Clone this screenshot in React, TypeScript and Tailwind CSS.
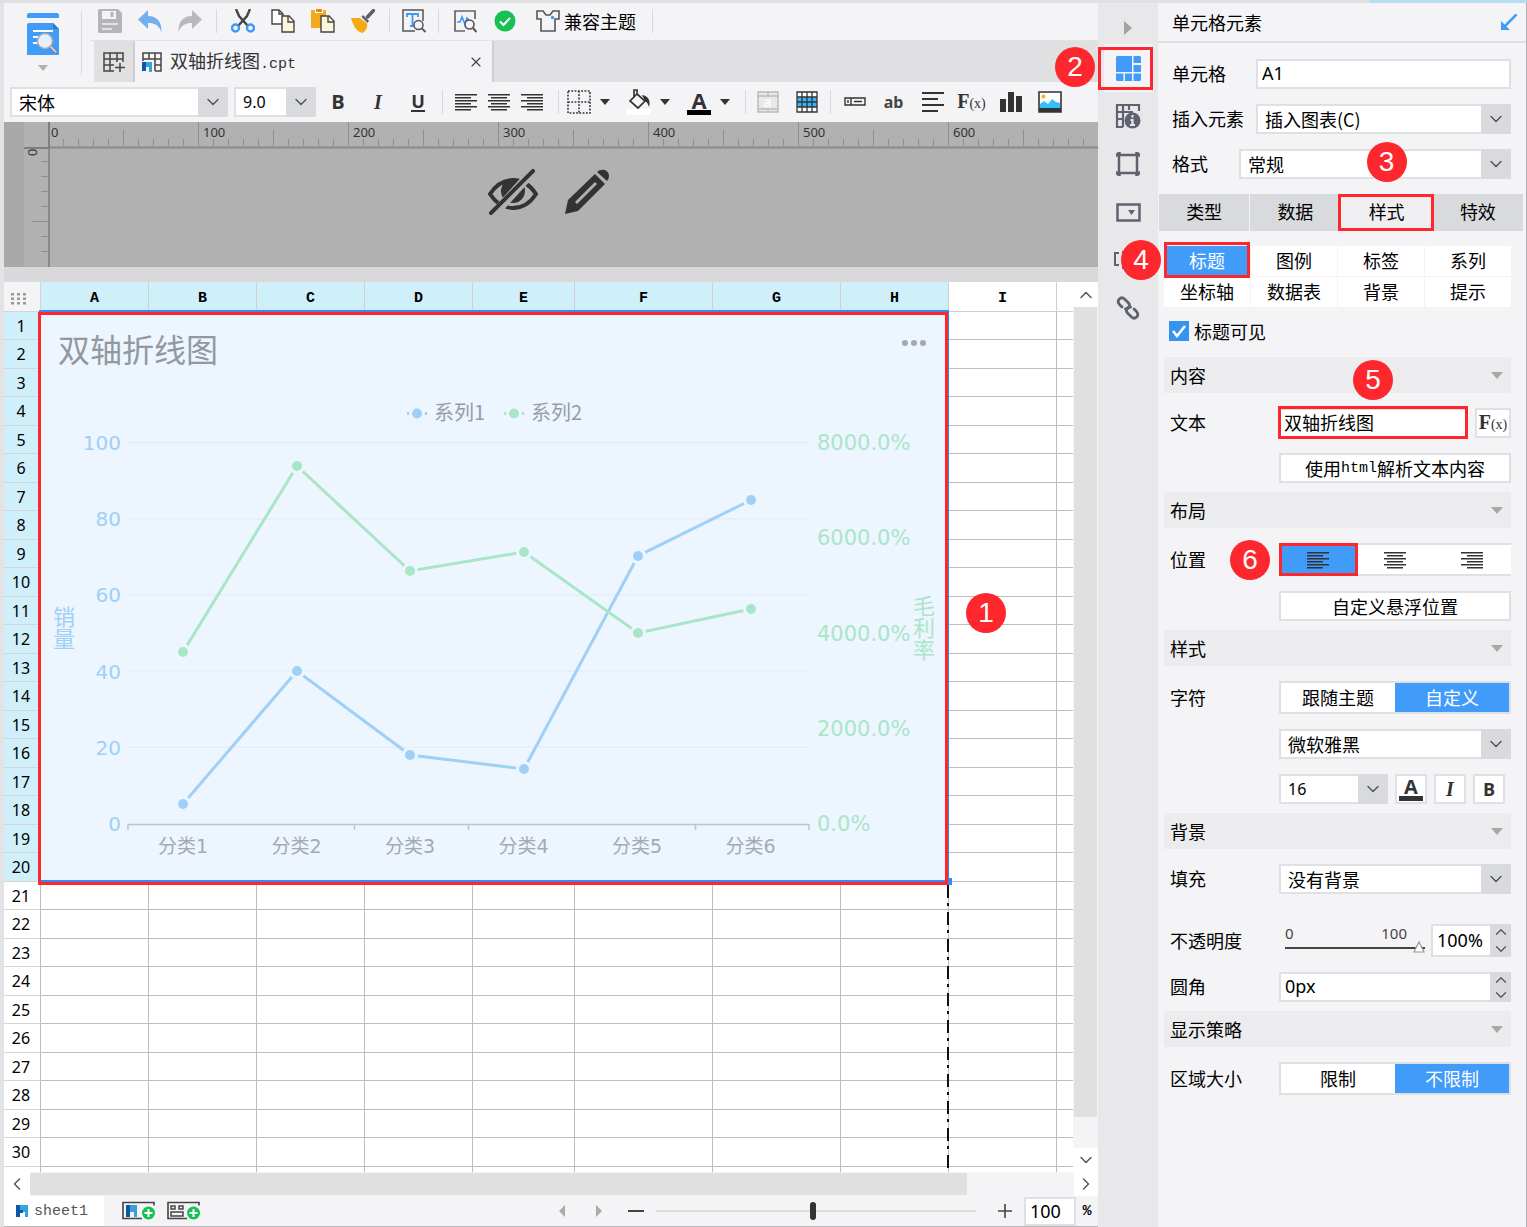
import type { ReactNode } from 'react';
import { ChevronDown, ChevronLeft, ChevronRight, ChevronUp, X } from 'lucide-react';

const columns = [
  { name: 'A', width: 'w-[108px]' },
  { name: 'B', width: 'w-[108px]' },
  { name: 'C', width: 'w-[108px]' },
  { name: 'D', width: 'w-[108px]' },
  { name: 'E', width: 'w-[102px]' },
  { name: 'F', width: 'w-[138px]' },
  { name: 'G', width: 'w-[128px]' },
  { name: 'H', width: 'w-[108px]' },
  { name: 'I', width: 'w-[108px]' },
];

const rows = Array.from({ length: 30 }, (_, i) => i + 1);

/* ---------- small shared parts ---------- */

const Badge = ({ children, className }: { children: ReactNode; className: string }) => (
  <span
    className={`pointer-events-none absolute z-20 flex size-10 items-center justify-center rounded-full bg-[#fd272d] font-['Liberation_Sans',sans-serif] text-[28px] leading-none text-white ${className}`}
  >
    {children}
  </span>
);

const Outline = ({ className }: { className: string }) => (
  <span className={`pointer-events-none absolute z-10 border-3 border-[#fd272d] ${className}`} />
);

const Separator = () => <span className="mx-1.5 h-6 w-px shrink-0 bg-[#d9d9dc]" />;

const Caret = () => (
  <svg viewBox="0 0 10 6" className="h-1.5 w-2.5 shrink-0 fill-[#333]">
    <path d="M0 0h10L5 6z" />
  </svg>
);

const IconButton = ({ label, width = 'w-10', children }: { label: string; width?: string; children: ReactNode }) => (
  <button type="button" aria-label={label} className={`flex h-8 shrink-0 items-center justify-center ${width}`}>
    {children}
  </button>
);

const AlignIcon = ({ kind }: { kind: 'left' | 'center' | 'right' }) => {
  const short = { left: 0, center: 3, right: 6 }[kind];
  return (
    <svg viewBox="0 0 22 18" className="h-[18px] w-[22px] fill-[#333]">
      {[0, 1, 2, 3, 4, 5].map((n) => (
        <rect key={n} x={n % 2 ? short : 0} y={n * 3 + 1} width={n % 2 ? 16 : 22} height="1.5" />
      ))}
    </svg>
  );
};

const FxText = () => (
  <span className="font-['Liberation_Serif',serif] text-xl leading-none text-[#333]">
    <b>F</b>
    <span className="text-sm">(x)</span>
  </span>
);

const Select = ({ label, id, value, className }: { label: string; id: string; value: string; className: string }) => (
  <div className={`relative h-[30px] ${className}`}>
    <select
      id={id}
      aria-label={label}
      className="block size-full appearance-none border-2 border-[#dfe0e3] bg-white pr-8 pl-[7px] leading-[26px] outline-none"
    >
      <option>{value}</option>
    </select>
    <span className="pointer-events-none absolute inset-y-0 right-0 flex w-[30px] items-center justify-center bg-[#d9dadd]">
      <ChevronDown size={20} strokeWidth={1.75} className="text-[#555]" />
    </span>
  </div>
);

/* ---------- top toolbars ---------- */

const MainToolbar = () => (
  <div className="flex h-[38px] items-center border-b border-[#e3e3e6] pb-0.5">
    <IconButton label="保存">
      <svg viewBox="0 0 24 24" className="size-6">
        <path d="M0 1.500Q0 0 1.500 0H20l4 4v18.500Q24 24 22.500 24h-21Q0 24 0 22.500z" fill="#b5b5b7" />
        <path d="M4 2h14v8H4z" fill="#f4f4f7" />
        <path d="M12.500 3h3v5h-3z" fill="#b5b5b7" />
        <path d="M4 15h16M4 20h10" stroke="#f4f4f7" strokeWidth="1.500" />
      </svg>
    </IconButton>
    <IconButton label="撤销">
      <svg viewBox="0 0 24 24" className="size-6 fill-[#74aef0]">
        <path d="M10 1v6c9 0 14 6 13.500 16C21 16.500 17 14 10 14v6L0 10.500z" />
      </svg>
    </IconButton>
    <IconButton label="重做">
      <svg viewBox="0 0 24 24" className="size-6 fill-[#b9b9bb]">
        <path d="M14 1v6C5 7 0 13 .500 23 3 16.500 7 14 14 14v6l10-9.500z" />
      </svg>
    </IconButton>
    <Separator />
    <IconButton label="剪切">
      <svg viewBox="0 0 24 24" className="size-6 fill-none">
        <path d="M5 0l3 7 9 10M19 0l-3 7-9 10" stroke="#444" strokeWidth="2.400" />
        <circle cx="4.500" cy="19" r="3.500" stroke="#3d98f8" strokeWidth="2.400" />
        <circle cx="19.500" cy="19" r="3.500" stroke="#3d98f8" strokeWidth="2.400" />
      </svg>
    </IconButton>
    <IconButton label="复制">
      <svg viewBox="0 0 24 24" className="size-6" stroke="#444" strokeWidth="1.400">
        <path d="M1 1h7l4 4v10H1z" fill="#fff" />
        <path d="M11 7h7l5 5v11H11z" fill="#fff4dc" />
        <path d="M17 7v6h6M8 1v4h4" fill="none" />
      </svg>
    </IconButton>
    <IconButton label="粘贴">
      <svg viewBox="0 0 24 24" className="size-6">
        <path d="M0 1h15v18H0z" fill="#f2aa1d" />
        <path d="M4 0h8v4H4z" fill="#fff" />
        <path d="M5 0h6v3H5z" fill="#e58a10" />
        <path d="M10 7h8l5 5v11H10z" fill="#fff4dc" stroke="#444" strokeWidth="1.400" />
        <path d="M17 7v6h6" fill="none" stroke="#444" strokeWidth="1.400" />
      </svg>
    </IconButton>
    <IconButton label="格式刷">
      <svg viewBox="0 0 24 24" className="size-6">
        <path d="M22.500 1.500l-6 6.500" stroke="#5d5d6b" strokeWidth="3.500" strokeLinecap="round" />
        <path d="M12 6l6 6-1.500 2-6-6z" fill="#5d5d6b" />
        <path d="M0 9h9l7 5.500c1 4-2 8.500-5 9.500C5 22 2 16 0 9z" fill="#f5a912" />
      </svg>
    </IconButton>
    <Separator />
    <IconButton label="查找文本" width="w-9">
      <svg viewBox="0 0 24 24" className="size-6 fill-none">
        <path d="M21 12V1H1v21h12" stroke="#555" strokeWidth="1.500" />
        <path d="M5 8V5h11v3M10.500 5v12M8 17h5" stroke="#3d98f8" strokeWidth="1.800" />
        <circle cx="16.500" cy="16" r="4.500" fill="#f4f4f7" stroke="#555" strokeWidth="1.500" />
        <path d="M20 19.500l3.500 3.500" stroke="#555" strokeWidth="1.800" />
      </svg>
    </IconButton>
    <Separator />
    <IconButton label="模板检测">
      <svg viewBox="0 0 24 24" className="size-6 fill-none">
        <path d="M22 10V2H2v20h10" stroke="#666" strokeWidth="1.700" />
        <path d="M4 13h3l2-5 3 7 2-6 2 2" stroke="#3d98f8" strokeWidth="1.700" />
        <circle cx="16.500" cy="15.500" r="4.500" fill="#f4f4f7" stroke="#555" strokeWidth="1.600" />
        <path d="M20 19l3.500 4" stroke="#555" strokeWidth="2" />
      </svg>
    </IconButton>
    <IconButton label="检测通过">
      <svg viewBox="0 0 22 22" className="size-[22px]">
        <circle cx="11" cy="11" r="10.500" fill="#16c052" />
        <path d="M6 11.500l3.500 3.500L16 8" fill="none" stroke="#fff" strokeWidth="2" />
      </svg>
    </IconButton>
    <button type="button" className="flex h-8 items-center gap-1 pl-[11px]">
      <svg viewBox="0 0 24 24" className="size-6 fill-none">
        <path d="M7 2H1v8h4v12h14V10h4V2h-6l-3 4h-4z" stroke="#555" strokeWidth="1.600" />
        <circle cx="16.500" cy="8.500" r="1.700" fill="#3d98f8" />
      </svg>
      兼容主题
    </button>
    <span className="ml-4 h-6 w-px bg-[#d9d9dc]" />
  </div>
);

const FileTabs = () => (
  <div className="ml-1 flex h-[41px] bg-[#e0e0e2]">
    <button type="button" aria-label="新建模板" className="flex w-[41px] items-center justify-center border-r-2 border-[#cfcfd2]">
      <svg viewBox="0 0 22 22" className="size-[22px] fill-none stroke-[#444]" strokeWidth="1.500">
        <path d="M20 11V2H1v18h10M1 8h19M1 14h10M7 2v18M14 2v9M17 12v9M12 16.500h10" />
      </svg>
    </button>
    <div className="flex w-[359px] items-center border-r-2 border-[#cfcfd2] bg-[#f4f4f7] pr-2 pl-[7px]">
      <svg viewBox="0 0 20 20" className="mr-2 size-5 fill-none">
        <path d="M1 9V1h18v18h-6M1 7h18M7 1v6M13 1v18M13 13h6" stroke="#444" strokeWidth="1.500" />
        <path d="M0 10h4v9H0z" fill="#0b57a8" />
        <path d="M4 10h6v10H7v-5H4z" fill="#35a3dc" />
      </svg>
      <span className="text-[#333]">
        双轴折线图<span className="font-['Liberation_Mono',monospace] text-[15px]">.cpt</span>
      </span>
      <button type="button" aria-label="关闭" className="ml-auto">
        <X size={16} strokeWidth={1.75} className="text-[#444]" />
      </button>
    </div>
  </div>
);

const FormatToolbar = () => (
  <div className="flex h-10 items-center pl-1.5">
    <Select id="font" label="字体" value="宋体" className="w-[218px]" />
    <Select
      id="size"
      label="字号"
      value="9.0"
      className="ml-1.5 w-[82px] font-['Noto_Sans',sans-serif] text-base whitespace-nowrap"
    />
    <div className="ml-0.5 flex items-center text-xl text-[#333]">
      <IconButton label="加粗">
        <b className="font-['Open_Sans',sans-serif]">B</b>
      </IconButton>
      <IconButton label="倾斜">
        <b className="font-['Liberation_Serif',serif] italic">I</b>
      </IconButton>
      <IconButton label="下划线">
        <b className="border-b-2 border-[#333] font-['Open_Sans',sans-serif] text-lg leading-[18px]">U</b>
      </IconButton>
    </div>
    <span className="mx-1 h-6 w-px bg-[#d9d9dc]" />
    <div className="ml-0.5 flex">
      <IconButton label="左对齐" width="w-[33px]">
        <AlignIcon kind="left" />
      </IconButton>
      <IconButton label="居中" width="w-[33px]">
        <AlignIcon kind="center" />
      </IconButton>
      <IconButton label="右对齐" width="w-[33px]">
        <AlignIcon kind="right" />
      </IconButton>
    </div>
    <span className="mr-1.5 ml-2.5 h-6 w-px bg-[#d9d9dc]" />
    <button type="button" aria-label="边框" className="flex w-[60px] shrink-0 items-center gap-[7px]">
      <svg viewBox="0 0 28 24" className="h-6 w-7 fill-none stroke-[#333]" strokeWidth="1.600">
        <path d="M3 1h22v22H3zM14 1v22M3 12h22" strokeDasharray="1.800 1.500" />
      </svg>
      <Caret />
    </button>
    <button type="button" aria-label="填充颜色" className="flex w-[60px] shrink-0 items-center gap-[7px]">
      <svg viewBox="0 0 28 26" className="h-[26px] w-7 fill-none">
        <path d="M2 20h24v6H2z" fill="#fff" />
        <path d="M12 5l8 7-7 7-8-7 7-7V1H9v7" stroke="#333" strokeWidth="1.700" />
        <path d="M17 6c6 1 9 5 7 12-1-3-2-5-4-6z" fill="#333" />
      </svg>
      <Caret />
    </button>
    <button type="button" aria-label="字体颜色" className="flex w-[60px] shrink-0 items-center gap-[7px]">
      <span className="flex w-7 flex-col items-center font-['Open_Sans',sans-serif] text-[22px] leading-5 font-bold text-[#333]">
        A
        <span className="h-[5px] w-6 bg-black" />
      </span>
      <Caret />
    </button>
    <span className="mr-0.5 h-6 w-px bg-[#d9d9dc]" />
    <IconButton label="合并单元格" width="w-[39px]">
      <svg viewBox="0 0 22 22" className="size-[22px] fill-none stroke-[#bbb]" strokeWidth="1.500">
        <path d="M1 1h20v20H1z" fill="#e8e8e8" />
        <path d="M1 5h20M1 18h20M11 1v4M11 18v3" />
        <path d="M8 9h5v6H8v-3h5" stroke="#fafafa" />
      </svg>
    </IconButton>
    <IconButton label="条件属性" width="w-[39px]">
      <svg viewBox="0 0 22 22" className="size-[22px]">
        <path d="M1 1h20v20H1z" fill="#fff" />
        <path d="M1 6h20v10H1z" fill="#35b5f5" />
        <path d="M1 1h20v20H1zM1 6h20M1 11h20M1 16h20M6 1v20M11 1v20M16 1v20" fill="none" stroke="#333" strokeWidth="1.300" />
      </svg>
    </IconButton>
    <span className="mx-1 h-6 w-px bg-[#d9d9dc]" />
    <IconButton label="控件" width="w-[39px]">
      <svg viewBox="0 0 22 10" className="h-2.5 w-[22px] fill-none stroke-[#333]" strokeWidth="1.400">
        <path d="M1 1h20v7H1zM4 3v3M7 1v7M10 4.500h8" />
      </svg>
    </IconButton>
    <IconButton label="文本" width="w-[39px]">
      <b className="font-['Noto_Sans',sans-serif] text-base text-[#444]">ab</b>
    </IconButton>
    <IconButton label="富文本" width="w-[39px]">
      <svg viewBox="0 0 22 22" className="size-[22px] stroke-[#333]" strokeWidth="2">
        <path d="M0 2h22M0 8h16M0 14h22M0 20h16" />
      </svg>
    </IconButton>
    <IconButton label="公式" width="w-[39px]">
      <FxText />
    </IconButton>
    <IconButton label="图表" width="w-[39px]">
      <svg viewBox="0 0 22 22" className="size-[22px] fill-[#333]">
        <path d="M0 8h6v13H0zM8 1h6v20H8zM16 5h6v16h-6z" />
      </svg>
    </IconButton>
    <IconButton label="图片" width="w-[39px]">
      <svg viewBox="0 0 24 22" className="h-[22px] w-6">
        <path d="M1 1h22v20H1z" fill="#fff" stroke="#333" strokeWidth="1.600" />
        <path d="M2 17v-4l4-3 4 3 4-5 4 3 4 1v5z" fill="#35c0f8" />
        <path d="M1 17h22v4H1z" fill="#333" />
        <circle cx="5.500" cy="5.500" r="2" fill="#fbb32a" />
      </svg>
    </IconButton>
  </div>
);

/* ---------- ruler and canvas header ---------- */

const Ruler = () => (
  <div className="flex h-[145px] bg-[#b1b1b1]">
    <div className="w-5 bg-[#a9a9a9]" />
    <svg className="h-full w-[26px] shrink-0 fill-none stroke-[#8e8e8e]">
      <path d="M17 39.500h8M17 54.500h8M17 69.500h8M17 84.500h8M8 99.500h17M17 114.500h8M17 129.500h8" />
      <path d="M0 26h25V0" stroke="#6f6f6f" strokeWidth="1.500" />
      <path d="M25 26v119" stroke="#8a8a8a" strokeWidth="2" />
      <text x="-34" y="13" transform="rotate(-90)" className="fill-[#333] stroke-none font-['Liberation_Sans',sans-serif] text-[13px]">
        0
      </text>
    </svg>
    <div className="relative min-w-0 flex-1">
      <svg className="block h-[27px] w-full fill-none">
        {Array.from({ length: 70 }, (_, n) => (
          <path key={n} d={`M${n * 15 - 1.5} ${n % 10 === 0 ? 0 : n % 5 === 0 ? 8 : 17}V24`} stroke="#8e8e8e" />
        ))}
        {[0, 100, 200, 300, 400, 500, 600].map((n) => (
          <text key={n} x={n * 1.5 + (n ? 3 : 1)} y="15" className="fill-[#333] font-['Noto_Sans',sans-serif] text-[13px]">
            {n}
          </text>
        ))}
        <path d="M0 25.500h1200" stroke="#8a8a8a" strokeWidth="2" />
      </svg>
      <div className="flex gap-[26px] pt-5 pl-[438px]">
        <svg viewBox="0 0 50 46" className="h-[46px] w-[50px] fill-none">
          <path d="M2 25Q11 11 25 11t23 14Q39 39 25 39T2 25z" stroke="#333" strokeWidth="4" />
          <circle cx="25" cy="22" r="12" fill="#333" />
          <path d="M46 1L6 45" stroke="#b1b1b1" strokeWidth="9" />
          <path d="M45 2L3 44" stroke="#333" strokeWidth="4" strokeLinecap="round" />
        </svg>
        <svg viewBox="0 0 46 46" className="size-[46px]">
          <path d="M1 45l3-14L31 5l10 10-27 27z" fill="#333" />
          <path d="M33 3q3-3 8-2 4 2 4 6 0 3-2 5z" fill="#333" />
          <path d="M12 34L32 14" stroke="#b1b1b1" strokeWidth="3" />
        </svg>
      </div>
    </div>
  </div>
);

/* ---------- chart ---------- */

const series = [
  { name: '系列1', color: '#9fd0f7', points: [[142, 492], [256, 359], [369, 443], [483, 457], [597, 244], [710, 188]] },
  { name: '系列2', color: '#a9e6c8', points: [[142, 340], [256, 154], [369, 259], [483, 240], [597, 321], [710, 297]] },
];

const Chart = () => (
  <svg viewBox="0 0 906 568" className="h-[568px] w-[906px] bg-[#edf5fe] font-['Noto_Sans_CJK_SC',sans-serif]">
    <text x="17" y="50" className="fill-[#92989e] text-[32px]">
      双轴折线图
    </text>
    <g fill="#a3a9af">
      <circle cx="864" cy="31" r="3" />
      <circle cx="873" cy="31" r="3" />
      <circle cx="882" cy="31" r="3" />
    </g>

    {series.map((s, i) => (
      <g key={s.name}>
        <path d={`M${366 + i * 97} 101.500h20`} stroke={s.color} strokeWidth="3" />
        <circle cx={376 + i * 97} cy="101.500" r="6.500" fill={s.color} stroke="#edf5fe" strokeWidth="3" />
        <text x={393 + i * 97} y="108" className="fill-[#979da3] text-[20px]">
          {s.name}
        </text>
      </g>
    ))}

    {/* left axis and grid lines */}
    {[100, 80, 60, 40, 20, 0].map((v) => (
      <g key={v}>
        {v > 0 && <path d={`M87 ${511.5 - v * 3.81}h681`} stroke="#e4edfb" strokeWidth="1.500" />}
        <text
          x="80"
          y={519 - v * 3.81}
          textAnchor="end"
          className="fill-[#9fd0f7] font-['DejaVu_Sans',sans-serif] text-[20px]"
        >
          {v}
        </text>
      </g>
    ))}
    {[8, 6, 4, 2, 0].map((v) => (
      <text key={v} x="776" y={519 - v * 47.6} className="fill-[#a9e6c8] font-['DejaVu_Sans',sans-serif] text-[21px]">
        {`${v * 1000}.0%`}
      </text>
    ))}
    <path d="M87 518v-5.500h681v5.500M313.500 512v6M427.500 512v6M654.500 512v6" fill="none" stroke="#bcc5cf" strokeWidth="1.500" />
    {[1, 2, 3, 4, 5, 6].map((n) => (
      <text
        key={n}
        x={28.5 + n * 113.5}
        y="541"
        textAnchor="middle"
        className="fill-[#a3aab2] font-['DejaVu_Sans','Noto_Sans_CJK_SC',sans-serif] text-[19px]"
      >
        分类{n}
      </text>
    ))}

    <text x="23" y="294" className="fill-[#9fd0f7] text-[22px] [writing-mode:vertical-rl]">
      销量
    </text>
    <text x="883" y="283" className="fill-[#a9e6c8] text-[22px] [writing-mode:vertical-rl]">
      毛利率
    </text>

    {series.map((s) => (
      <g key={s.name}>
        <polyline points={s.points.join(' ')} fill="none" stroke={s.color} strokeWidth="3" />
        {s.points.map(([x, y]) => (
          <circle key={x} cx={x} cy={y} r="6.500" fill={s.color} stroke="#edf5fe" strokeWidth="3" />
        ))}
      </g>
    ))}
  </svg>
);

/* ---------- sheet ---------- */

const Sheet = () => (
  <div className="flex min-h-0 flex-1">
    <div className="relative min-w-0 flex-1 overflow-hidden bg-white">
      <table className="w-full table-fixed border-separate border-spacing-0 leading-none text-black">
        <thead className="font-['Liberation_Mono',monospace] text-[15px]">
          <tr className="h-[30px]">
            <th className="w-[37px] border-r border-b border-[#d5d5d5] bg-[#f4f4f7] p-0" aria-label="全选">
              <svg viewBox="0 0 15 12" className="mt-1 ml-[7px] h-3 w-[15px] fill-[#999]">
                {[0, 1, 2].map((x) =>
                  [0, 1, 2].map((y) => <rect key={`${x}${y}`} x={x * 6} y={y * 4.5} width="3" height="2.500" />)
                )}
              </svg>
            </th>
            {columns.map((c) => (
              <th
                key={c.name}
                className={`border-r border-b border-[#d0d0d0] p-0 pt-1 ${c.width} ${c.name === 'I' ? 'bg-white' : 'bg-[#cfeffb]'}`}
              >
                {c.name}
              </th>
            ))}
            <th className="border-b border-[#d0d0d0] p-0" />
          </tr>
        </thead>
        <tbody className="font-['Noto_Sans',sans-serif] text-base leading-none">
          {rows.map((r) => (
            <tr key={r} className="h-[28px] even:h-[29px]">
              <th
                className={`border-r border-b border-r-[#bdbdbd] border-b-[#d5d5d5] p-0 pr-0.5 font-normal ${r <= 20 ? 'bg-[#cfeffb]' : 'bg-white'}`}
              >
                {r}
              </th>
              {columns.map((c) => (
                <td key={c.name} className="border-r border-b border-[#bdbdbd] p-0" />
              ))}
              <td className="border-b border-[#bdbdbd] p-0" />
            </tr>
          ))}
          <tr className="h-[5px]">
            <th className="border-r border-[#bdbdbd] p-0" />
            {columns.map((c) => (
              <td key={c.name} className="border-r border-[#bdbdbd] p-0" />
            ))}
            <td className="p-0" />
          </tr>
        </tbody>
      </table>

      {/* page break */}
      <svg className="absolute top-[600px] left-[943px] h-full w-0.5">
        <path d="M1 3V400" stroke="#111" strokeWidth="2" strokeDasharray="13 5 3 6" />
      </svg>

      {/* floating chart with its selection frame */}
      <div className="absolute top-7 left-[35px] border-2 border-[#3a86f5]">
        <Chart />
      </div>
      <Outline className="top-[30px] left-[34px] h-[573px] w-[910px]" />
      <span className="absolute top-[596px] left-[941px] size-[7px] bg-[#3a86f5]" />
      <Badge className="top-[311px] left-[962px]">1</Badge>
    </div>

    <div className="flex w-[25px] flex-col bg-[#f4f4f7]">
      <button type="button" aria-label="向上滚动" className="flex h-[25px] items-center justify-center bg-white">
        <ChevronUp size={20} strokeWidth={1.75} className="text-[#555]" />
      </button>
      <div className="mx-px h-[810px] bg-[#e0e0e0]" />
      <button type="button" aria-label="向下滚动" className="mt-auto flex h-6 items-center justify-center bg-white">
        <ChevronDown size={20} strokeWidth={1.75} className="text-[#555]" />
      </button>
    </div>
  </div>
);

const AddBadge = ({ x }: { x: number }) => (
  <g>
    <circle cx={x} cy="12" r="6.500" fill="#16c052" />
    <path d={`M${x - 4} 12h8M${x} 8v8`} stroke="#fff" strokeWidth="2" />
  </g>
);

const SheetBar = () => (
  <>
    <div className="flex h-6 bg-[#f4f4f7]">
      <button type="button" aria-label="向左滚动" className="flex w-[26px] items-center justify-center bg-white">
        <ChevronLeft size={20} strokeWidth={1.75} className="text-[#555]" />
      </button>
      <div className="my-px w-[937px] bg-[#e0e0e0]" />
      <button type="button" aria-label="向右滚动" className="ml-auto flex w-6 items-center justify-center bg-white">
        <ChevronRight size={20} strokeWidth={1.75} className="text-[#555]" />
      </button>
    </div>
    <div className="flex h-[31px] items-center border-b border-[#b8b8bb]">
      <button type="button" className="flex h-full w-[100px] items-center gap-1.5 bg-white pl-3 font-['Liberation_Mono',monospace] text-[15px] text-[#555]">
        <svg viewBox="0 0 12 12" className="size-3">
          <path d="M0 0h4v12H0z" fill="#0b57a8" />
          <path d="M4 0h8v12H9V7H4z" fill="#35a3dc" />
          <path d="M3 5h4v3H3z" fill="#0b57a8" />
        </svg>
        sheet1
      </button>
      <button type="button" aria-label="新增普通sheet" className="ml-[18px]">
        <svg viewBox="0 0 34 20" className="h-5 w-[34px]">
          <path d="M20 17.500H1V1.500h31v3" fill="none" stroke="#444" strokeWidth="1.600" />
          <path d="M4 4h4v12H4z" fill="#0b57a8" />
          <path d="M8 4h7v12h-3v-5H8z" fill="#35a3dc" />
          <AddBadge x={26.5} />
        </svg>
      </button>
      <button type="button" aria-label="新增聚合sheet" className="ml-[11px]">
        <svg viewBox="0 0 34 20" className="h-5 w-[34px]">
          <path d="M20 17.500H1V1.500h31v3" fill="none" stroke="#444" strokeWidth="1.600" />
          <path d="M4 5h4v3H4zM12 5h4v3h-4zM4 11h12v4H4z" fill="none" stroke="#444" strokeWidth="1.500" />
          <AddBadge x={26.5} />
        </svg>
      </button>
      <button type="button" aria-label="上一个" className="ml-auto">
        <svg viewBox="0 0 6 12" className="h-3 w-1.5 fill-[#aaa]">
          <path d="M6 0v12L0 6z" />
        </svg>
      </button>
      <button type="button" aria-label="下一个" className="ml-[31px]">
        <svg viewBox="0 0 6 12" className="h-3 w-1.5 fill-[#aaa]">
          <path d="M0 0v12l6-6z" />
        </svg>
      </button>
      <button type="button" aria-label="缩小" className="ml-[26px] flex h-5 w-4 items-center">
        <span className="h-0.5 w-full bg-[#444]" />
      </button>
      <input
        type="range"
        aria-label="缩放"
        defaultValue={49}
        className="ml-3 h-5 w-80 appearance-none bg-transparent [&::-webkit-slider-runnable-track]:h-0.5 [&::-webkit-slider-runnable-track]:bg-[#dcdcdc] [&::-webkit-slider-thumb]:-mt-2 [&::-webkit-slider-thumb]:h-[18px] [&::-webkit-slider-thumb]:w-1.5 [&::-webkit-slider-thumb]:appearance-none [&::-webkit-slider-thumb]:rounded-sm [&::-webkit-slider-thumb]:bg-[#333]"
      />
      <button type="button" aria-label="放大" className="ml-[22px]">
        <svg viewBox="0 0 14 14" className="size-3.5 stroke-[#444]" strokeWidth="1.600">
          <path d="M0 7h14M7 0v14" />
        </svg>
      </button>
      <input
        aria-label="缩放比例"
        defaultValue="100"
        className="ml-3 h-[29px] w-[52px] border-2 border-[#dfe0e3] bg-white pl-1 font-['Noto_Sans',sans-serif] text-lg outline-none"
      />
      <span className="w-[22px] text-center font-['Liberation_Mono',monospace] text-[15px] font-bold">%</span>
    </div>
  </>
);

/* ---------- icon rail ---------- */

const Rail = () => (
  <div className="flex w-[60px] shrink-0 flex-col bg-[#e8e8ea] text-[#5f6370]">
    <button type="button" aria-label="收起" className="flex h-[41px] w-full justify-center pt-[18px]">
      <svg viewBox="0 0 8 14" className="h-3.5 w-2 fill-[#a3a3a3]">
        <path d="M0 0v14l8-7z" />
      </svg>
    </button>
    <div className="relative h-12">
      <button type="button" aria-label="单元格元素" className="mx-1.5 flex size-12 items-center justify-center bg-[#f4f4f7]">
        <svg viewBox="0 0 25 25" className="size-[25px] fill-[#419bf9]">
          <path d="M1 0h15v16H0V1zM17.500 0H24l1 1v6h-7.500zM17.500 9H25v7h-7.500zM0 17.500h7.500V25H1l-1-1zM9 17.500h7V25H9zM17.500 17.500H25V24l-1 1h-6.500z" />
        </svg>
      </button>
      <Outline className="top-[3px] left-0 h-[43px] w-[55px]" />
      <Badge className="top-[3px] -left-[43px]">2</Badge>
    </div>
    <button type="button" aria-label="单元格属性" className="flex h-12 w-full items-center justify-center">
      <svg viewBox="0 0 26 26" className="size-[26px] fill-none stroke-current" strokeWidth="2.200">
        <path d="M8 24H2V2h22v6M2 9h10M8 2v22M2 16h6M14 2v5M8 9h10" />
        <circle cx="17.500" cy="17.500" r="8" fill="#5f6370" stroke="none" />
        <path d="M17.500 12v2.500M15.500 17h2v5M15 22h5" stroke="#e8e8ea" />
      </svg>
    </button>
    <button type="button" aria-label="悬浮元素" className="flex h-12 w-full items-center justify-center">
      <svg viewBox="0 0 24 24" className="size-6 fill-none stroke-current">
        <path d="M3 3h18v18H3z" strokeWidth="2.500" />
        <path d="M0 3h4M20 3h4M0 21h4M20 21h4M3 0v4M21 0v4M3 20v4M21 20v4" strokeWidth="3.500" />
      </svg>
    </button>
    <button type="button" aria-label="控件设置" className="flex h-12 w-full items-center justify-center">
      <svg viewBox="0 0 25 19" className="h-[19px] w-[25px]">
        <path d="M1.500 1.500h22v16h-22z" fill="none" stroke="currentColor" strokeWidth="2.500" />
        <path d="M12 7h7l-3.500 5z" fill="currentColor" />
      </svg>
    </button>
    <button type="button" aria-label="条件属性" className="flex h-12 w-full items-center pl-4">
      <svg viewBox="0 0 24 18" className="h-[18px] w-6 fill-none stroke-current" strokeWidth="2">
        <path d="M5 2H1v12h4M9 0v18M13 2h9v12h-9" />
      </svg>
    </button>
    <button type="button" aria-label="超级链接" className="flex h-12 w-full items-center justify-center">
      <svg viewBox="0 0 24 24" className="size-6 fill-none stroke-current" strokeWidth="2.800" strokeLinecap="round">
        <path d="M6 11L3.500 8.500C0 4 5 0 8.500 3l4 4c2.500 3 0 6.500-3 6" />
        <path d="M18 13l2.500 2.500C24 20 19 24 15.500 21l-4-4c-2.500-3 0-6.500 3-6" />
      </svg>
    </button>
  </div>
);

/* ---------- property panel ---------- */

const Section = ({ title, children }: { title: string; children: ReactNode }) => (
  <section>
    <button type="button" className="flex h-9 w-full items-center justify-between bg-[#ececee] pr-2 pl-1.5">
      {title}
      <svg viewBox="0 0 12 7" className="h-[7px] w-3 fill-[#a8a8a8]">
        <path d="M0 0h12L6 7z" />
      </svg>
    </button>
    <div className="flex flex-col gap-[15px] pt-[15px] pb-[9px]">{children}</div>
  </section>
);

const Field = ({ label, htmlFor, children }: { label?: string; htmlFor?: string; children: ReactNode }) => (
  <div className="flex items-center">
    <label htmlFor={htmlFor} className="w-[115px] shrink-0 pb-0.5 pl-1.5">
      {label}
    </label>
    <div className="flex min-w-0 flex-1 items-center">{children}</div>
  </div>
);

const boxed = 'flex items-center justify-center border-2 border-[#dfe0e3] bg-white';

const Segments = ({ options }: { options: [string, string] }) => (
  <div className="grid h-[33px] flex-1 grid-cols-2 border-2 border-[#dfe0e3] bg-white">
    <button type="button" className="pb-0.5">
      {options[0]}
    </button>
    <button type="button" className="bg-[#419bf9] pb-0.5 text-white">
      {options[1]}
    </button>
  </div>
);

const Stepper = () => (
  <span className="-my-0.5 -mr-0.5 flex w-[21px] flex-col items-center bg-[#d9dadd] text-[#555]">
    <button type="button" aria-label="增加" className="flex h-1/2 items-center">
      <ChevronUp size={18} strokeWidth={1.75} />
    </button>
    <button type="button" aria-label="减少" className="flex h-1/2 items-center">
      <ChevronDown size={18} strokeWidth={1.75} />
    </button>
  </span>
);

const Panel = () => (
  <aside className="w-[369px] shrink-0 border-r border-[#b0b0b3]">
    <div className="flex h-10 items-center justify-between border-b-2 border-[#e0e0e3] pr-2 pl-3.5">
      单元格元素
      <button type="button" aria-label="展开">
        <svg viewBox="0 0 18 18" className="size-[18px]">
          <path d="M16.500 1.500L5 13" stroke="#419bf9" strokeWidth="2.500" />
          <path d="M1 8v9h9z" fill="#419bf9" />
        </svg>
      </button>
    </div>

    <div className="flex flex-col gap-[15px] pt-4 pr-[15px] pl-3.5">
      <div className="flex items-center">
        <label htmlFor="cell" className="w-[84px] pb-0.5">
          单元格
        </label>
        <input
          id="cell"
          defaultValue="A1"
          className="h-[30px] min-w-0 flex-1 border-2 border-[#dfe0e3] bg-white pb-0.5 pl-1 font-['Noto_Sans',sans-serif] outline-none"
        />
      </div>
      <div className="flex items-center">
        <label htmlFor="insert" className="w-[84px] pb-0.5">
          插入元素
        </label>
        <Select id="insert" label="插入元素" value="插入图表(C)" className="flex-1" />
      </div>
      <div className="flex items-center">
        <label htmlFor="format" className="w-[67px] pb-0.5">
          格式
        </label>
        <Select id="format" label="格式" value="常规" className="flex-1" />
      </div>
    </div>

    <div className="mt-[15px] mr-[3px] ml-px grid h-[37px] grid-cols-4 gap-px">
      <button type="button" className="bg-[#d9dadd] pb-1">
        类型
      </button>
      <button type="button" className="bg-[#d9dadd] pb-1">
        数据
      </button>
      <div className="relative">
        <button type="button" className="size-full bg-[#efeff1] pb-1">
          样式
        </button>
        <Outline className="inset-y-0 -right-0.5 -left-1" />
        <Badge className="-top-[52px] left-[25px]">3</Badge>
      </div>
      <button type="button" className="bg-[#d9dadd] pb-1">
        特效
      </button>
    </div>

    <div className="pr-[15px] pl-1.5">
      <div className="mt-[15px] grid auto-rows-[30px] grid-cols-4 gap-px">
        <div className="relative">
          <button type="button" className="size-full bg-[#419bf9] pb-0.5 text-white">
            标题
          </button>
          <Outline className="-top-1 right-0 -bottom-0.5 left-0" />
          <Badge className="-top-1.5 -left-[43px]">4</Badge>
        </div>
        {['图例', '标签', '系列', '坐标轴', '数据表', '背景', '提示'].map((t) => (
          <button key={t} type="button" className="bg-white pb-0.5">
            {t}
          </button>
        ))}
      </div>

      <label className="mt-3.5 mb-4 flex h-5 items-center gap-[5px] pl-[5px]">
        <span className="relative size-5">
          <input type="checkbox" defaultChecked className="peer block size-5 appearance-none bg-white checked:bg-[#3494f0]" />
          <svg viewBox="0 0 20 20" className="pointer-events-none absolute inset-0 hidden size-5 fill-none stroke-white peer-checked:block" strokeWidth="2.500">
            <path d="M4 10l4 5 8-10" />
          </svg>
        </span>
        标题可见
      </label>

      <Section title="内容">
        <Field label="文本" htmlFor="title-text">
          <div className="relative mr-2 min-w-0 flex-1">
            <input
              id="title-text"
              defaultValue="双轴折线图"
              className="block h-[30px] w-full border-2 border-[#dfe0e3] bg-white pb-0.5 pl-[3px] outline-none"
            />
            <Outline className="-inset-x-px -top-0.5 -bottom-px" />
            <Badge className="-top-12 left-[74px]">5</Badge>
          </div>
          <button type="button" aria-label="公式" className={`h-[30px] w-9 ${boxed}`}>
            <FxText />
          </button>
        </Field>
        <Field>
          <button type="button" className={`h-[30px] flex-1 ${boxed}`}>
            使用<span className="font-['Liberation_Mono',monospace] text-[15px]">html</span>解析文本内容
          </button>
        </Field>
      </Section>

      <Section title="布局">
        <Field label="位置">
          <div className="relative grid h-[33px] flex-1 grid-cols-3 border-y-2 border-[#dfe0e3] bg-white">
            <button type="button" aria-label="左对齐" className="flex items-center justify-center bg-[#419bf9]">
              <AlignIcon kind="left" />
            </button>
            <button type="button" aria-label="居中" className="flex items-center justify-center">
              <AlignIcon kind="center" />
            </button>
            <button type="button" aria-label="右对齐" className="flex items-center justify-center">
              <AlignIcon kind="right" />
            </button>
            <Outline className="-top-0.5 -bottom-0.5 left-0 w-[79px]" />
            <Badge className="-top-[5px] -left-[49px]">6</Badge>
          </div>
        </Field>
        <Field>
          <button type="button" className={`h-[30px] flex-1 ${boxed}`}>
            自定义悬浮位置
          </button>
        </Field>
      </Section>

      <Section title="样式">
        <Field label="字符">
          <Segments options={['跟随主题', '自定义']} />
        </Field>
        <Field>
          <Select id="title-font" label="标题字体" value="微软雅黑" className="flex-1" />
        </Field>
        <Field>
          <Select id="title-size" label="标题字号" value="16" className="w-[109px] font-['Noto_Sans',sans-serif] text-base" />
          <button type="button" aria-label="字体颜色" className={`ml-[7px] h-[30px] w-8 flex-col ${boxed}`}>
            <b className="font-['Open_Sans',sans-serif] text-xl leading-[18px] text-[#333]">A</b>
            <span className="h-[5px] w-6 bg-[#333]" />
          </button>
          <button type="button" aria-label="倾斜" className={`ml-[7px] h-[30px] w-8 ${boxed}`}>
            <b className="font-['Liberation_Serif',serif] text-xl text-[#333] italic">I</b>
          </button>
          <button type="button" aria-label="加粗" className={`ml-[7px] h-[30px] w-8 ${boxed}`}>
            <b className="font-['Open_Sans',sans-serif] text-lg text-[#333]">B</b>
          </button>
        </Field>
      </Section>

      <Section title="背景">
        <Field label="填充" htmlFor="fill">
          <Select id="fill" label="填充" value="没有背景" className="flex-1" />
        </Field>
        <div className="pt-[15px]">
          <Field label="不透明度" htmlFor="opacity">
            <div className="relative mx-1.5 h-[33px] min-w-0 flex-1">
              <div className="flex justify-between pr-[18px] font-['Noto_Sans',sans-serif] text-[15px] leading-[18px] text-[#444]">
                <span>0</span>
                <span>100</span>
              </div>
              <input
                id="opacity"
                type="range"
                defaultValue={100}
                className="block h-3 w-full appearance-none bg-transparent [&::-webkit-slider-runnable-track]:h-0.5 [&::-webkit-slider-runnable-track]:bg-[#444] [&::-webkit-slider-thumb]:size-3 [&::-webkit-slider-thumb]:appearance-none"
              />
              <svg viewBox="0 0 12 12" className="pointer-events-none absolute right-0 bottom-1 size-3">
                <path d="M6 1l5 10H1z" fill="#fff" stroke="#999" strokeWidth="1.200" />
              </svg>
            </div>
            <div className="flex h-[33px] w-20 border-2 border-[#dfe0e3] bg-white">
              <input aria-label="不透明度数值" defaultValue="100%" className="w-0 flex-1 pb-0.5 pl-1 font-['Noto_Sans',sans-serif] outline-none" />
              <Stepper />
            </div>
          </Field>
        </div>
        <Field label="圆角" htmlFor="radius">
          <div className="flex h-[30px] flex-1 border-2 border-[#dfe0e3] bg-white">
            <input id="radius" defaultValue="0px" className="w-0 flex-1 pb-0.5 pl-1 font-['Noto_Sans',sans-serif] outline-none" />
            <Stepper />
          </div>
        </Field>
      </Section>

      <Section title="显示策略">
        <Field label="区域大小">
          <Segments options={['限制', '不限制']} />
        </Field>
      </Section>
    </div>
  </aside>
);

const App = () => (
  <div className="flex min-h-screen flex-col bg-[#f4f4f7] font-['Noto_Sans_CJK_SC',sans-serif] text-lg leading-none text-black">
    <div className="flex h-[3px] justify-end bg-[#e0e0e2]">
      <span className="w-[157px] bg-[#b9dcf5]" />
    </div>
    <div className="flex flex-1">
      <main className="flex min-w-0 flex-1 flex-col border-l-4 border-[#e3e3e5]">
        <div className="flex">
          <button type="button" aria-label="预览" className="relative flex w-[86px] shrink-0 flex-col items-center pt-2.5 pr-[9px]">
            <svg viewBox="0 0 32 42" className="h-[42px] w-8">
              <path d="M0 2q0-2 2-2h28q2 0 2 2v3H0zM0 12q0-2 2-2h24l6 6v26H0z" fill="#419bf9" />
              <path d="M26 10v6h6z" fill="#2a7bd0" />
              <path d="M6 18h20M6 24h6M6 30h6" stroke="#fff" strokeWidth="2" />
              <path d="M23 33l6 6" stroke="#888" strokeWidth="3.500" />
              <path d="M23 33l6 6" stroke="#ddd" strokeWidth="1.500" />
              <circle cx="18" cy="28" r="7.500" fill="#e6f1fd" stroke="#aaa" strokeWidth="1.500" />
            </svg>
            <svg viewBox="0 0 10 6" className="mt-2.5 h-1.5 w-2.5 fill-[#b0b0b0]">
              <path d="M0 0h10L5 6z" />
            </svg>
            <span className="absolute top-2 right-2 h-16 w-px bg-[#d9d9dc]" />
          </button>
          <div className="min-w-0 flex-1">
            <MainToolbar />
            <FileTabs />
          </div>
        </div>
        <FormatToolbar />
        <Ruler />
        <div className="h-[15px] bg-[#d9d9db]" />
        <Sheet />
        <SheetBar />
      </main>
      <Rail />
      <Panel />
    </div>
  </div>
);

export default App;
